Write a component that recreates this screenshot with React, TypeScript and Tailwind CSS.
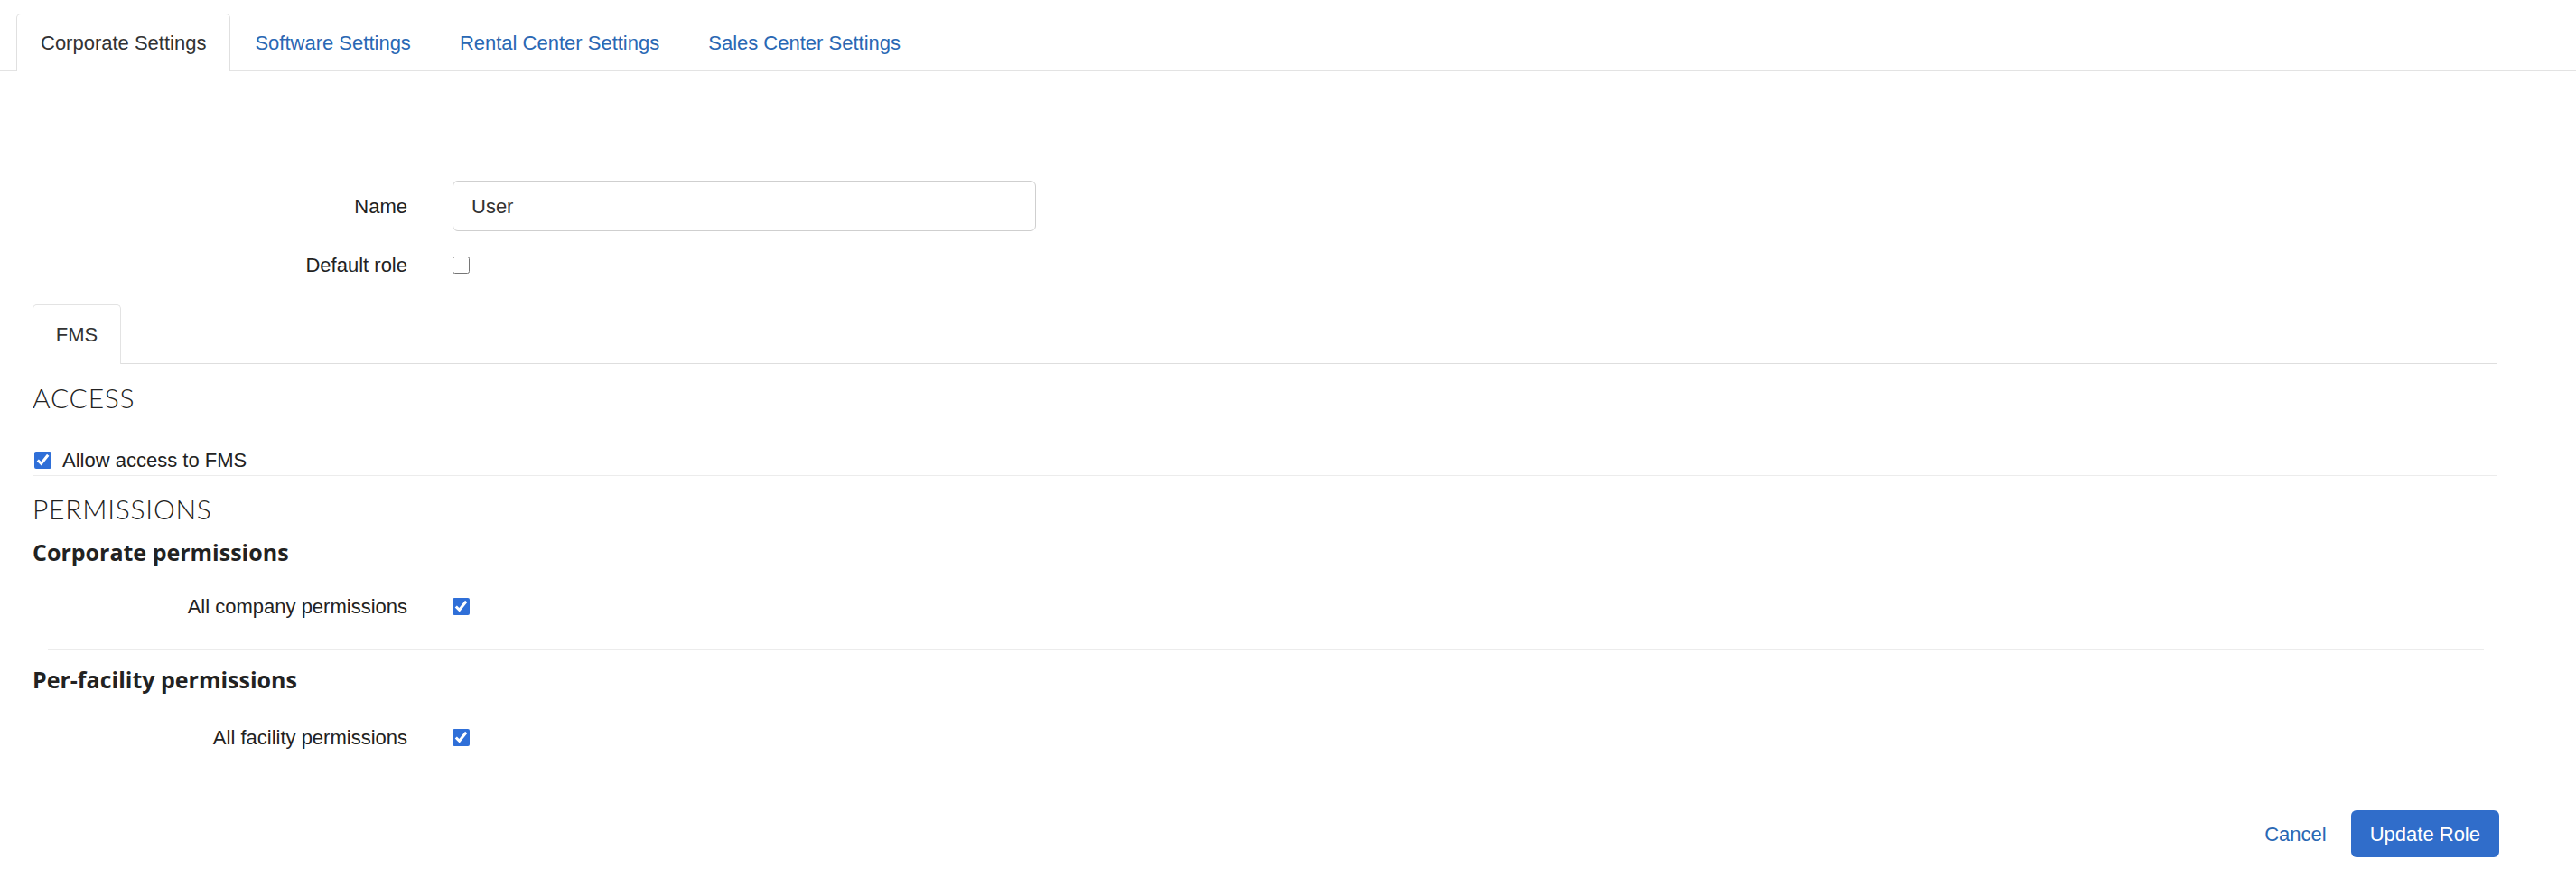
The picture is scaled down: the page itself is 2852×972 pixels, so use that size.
const sans = { fontFamily: '"Liberation Sans", Arial, sans-serif' };

function Check({ checked }: { checked?: boolean }) {
  return (
    <input
      type="checkbox"
      defaultChecked={checked}
      className="w-[19px] h-[19px] accent-[#2f6fd8] m-0"
    />
  );
}

function Row({ label, children, h }: { label: string; children: React.ReactNode; h: string }) {
  return (
    <div className={`flex items-center ${h}`}>
      <div className="w-[451px] text-right text-[22px] text-[#222]">{label}</div>
      <div className="ml-[50px] flex items-center">{children}</div>
    </div>
  );
}

export default function App() {
  const tabs = ["Corporate Settings", "Software Settings", "Rental Center Settings", "Sales Center Settings"];
  return (
    <div className="w-[2852px] h-[972px] bg-white" style={sans}>
      {/* top tabs */}
      <div className="pt-[15px] pl-[18px] flex border-b border-[#e3e3e3] h-[79px]">
        {tabs.map((t, i) =>
          i === 0 ? (
            <div key={t} className="h-[64px] px-[26px] flex items-center border border-b-0 border-[#e0e0e0] rounded-t-[5px] bg-white text-[22px] text-[#333] -mb-px">
              {t}
            </div>
          ) : (
            <div key={t} className="h-[64px] px-[27px] flex items-center text-[22px] text-[#2a68b4]">
              {t}
            </div>
          )
        )}
      </div>

      <div className="pl-[0px] pt-[121px]">
        <Row label="Name" h="h-[56px]">
          <div className="w-[646px] h-[56px] border border-[#cfcfcf] rounded-[6px] flex items-center px-[20px] text-[22px] text-[#333]">
            User
          </div>
        </Row>
        <div className="h-[22px]" />
        <Row label="Default role" h="h-[30px]">
          <Check />
        </Row>
      </div>

      <div className="pl-[36px] pr-[87px] mt-[29px]">
        <div className="flex border-b border-[#dedede]">
          <div className="h-[66px] w-[98px] flex items-center justify-center border border-b-0 border-[#e3e3e3] rounded-t-[5px] text-[22px] text-[#333] -mb-px bg-white">
            FMS
          </div>
        </div>
        <div className="mt-[19px] h-[36px] flex items-center text-[30px] font-light text-[#222] tracking-wide" style={{ fontFamily: "Lato, sans-serif" }}>
          ACCESS
        </div>
        <div className="mt-[36px] h-[30px] flex items-center gap-[12px] text-[22px] text-[#222]">
          <span className="ml-[2px] flex"><Check checked /></span>
          Allow access to FMS
        </div>
        <div className="mt-[2px] border-b border-[#ececec]" />
        <div className="mt-[18px] h-[36px] flex items-center text-[30px] font-light text-[#222] tracking-wide" style={{ fontFamily: "Lato, sans-serif" }}>
          PERMISSIONS
        </div>
        <div className="mt-[13px] h-[36px] flex items-center text-[25px] font-bold text-[#222]" style={{ fontFamily: '"Open Sans", sans-serif' }}>
          Corporate permissions
        </div>
      </div>

      <div className="mt-[26px]">
        <Row label="All company permissions" h="h-[30px]"><Check checked /></Row>
      </div>
      <div className="ml-[53px] mr-[102px] mt-[33px] border-b border-[#ececec]" />
      <div className="pl-[36px] mt-[15px] h-[36px] flex items-center text-[25px] font-bold text-[#222]" style={{ fontFamily: '"Open Sans", sans-serif' }}>
        Per-facility permissions
      </div>
      <div className="mt-[30px]">
        <Row label="All facility permissions" h="h-[30px]"><Check checked /></Row>
      </div>

      <div className="mt-[66px] pr-[85px] flex justify-end items-center gap-[27px]">
        <span className="text-[22px] text-[#2a68b4]">Cancel</span>
        <button className="h-[52px] px-[21px] rounded-[6px] bg-[#306dca] text-white text-[22px]">Update Role</button>
      </div>
    </div>
  );
}
